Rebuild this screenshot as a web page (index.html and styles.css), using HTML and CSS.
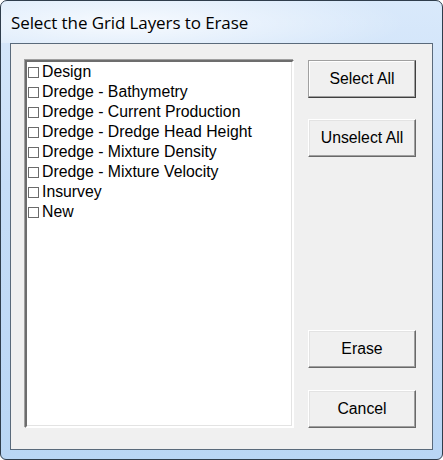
FILE: index.html
```html
<!DOCTYPE html>
<html>
<head>
<meta charset="utf-8">
<link rel="stylesheet" href="styles.css">
</head>
<body>
<div class="window">
  <div class="titlebar"><span class="title">Select the Grid Layers to Erase</span></div>
  <div class="client">
    <div class="listbox">
      <div class="item"><span class="cb"></span>Design</div>
      <div class="item"><span class="cb"></span>Dredge - Bathymetry</div>
      <div class="item"><span class="cb"></span>Dredge - Current Production</div>
      <div class="item"><span class="cb"></span>Dredge - Dredge Head Height</div>
      <div class="item"><span class="cb"></span>Dredge - Mixture Density</div>
      <div class="item"><span class="cb"></span>Dredge - Mixture Velocity</div>
      <div class="item"><span class="cb"></span>Insurvey</div>
      <div class="item"><span class="cb"></span>New</div>
    </div>
    <div class="buttons">
      <div class="group">
        <button class="btn default">Select All</button>
        <button class="btn">Unselect All</button>
      </div>
      <div class="group low">
        <button class="btn">Erase</button>
        <button class="btn">Cancel</button>
      </div>
    </div>
  </div>
</div>
</body>
</html>
```
FILE: styles.css
```css
html, body {
  margin: 0;
  padding: 0;
  background: #ffffff;
}
.window {
  box-sizing: border-box;
  width: 443px;
  height: 460px;
  border: 1px solid #2f3d4c;
  border-radius: 7px 7px 6px 6px;
  background: linear-gradient(180deg, #d9e9fb 0%, #c6ddf7 40%, #b9d6f5 100%);
  overflow: hidden;
  display: flex;
  flex-direction: column;
  padding: 0 9px 9px 9px;
}
.titlebar {
  height: 42px;
  display: flex;
  align-items: center;
  background: radial-gradient(ellipse 280px 42px at 125px 22px, rgba(255,255,255,0.8), rgba(255,255,255,0) 100%);
  margin: 0 -9px;
  padding-left: 10px;
}
.title {
  font-family: "Open Sans", "Noto Sans", sans-serif;
  font-size: 17px;
  color: #000;
  margin-top: 1px;
  letter-spacing: -0.1px;
}
.client {
  flex: 1;
  border: 1px solid #5a6a7b;
  background: #f0f0f0;
  display: flex;
  padding: 16px 14px 21px 14px;
}
.listbox {
  box-sizing: border-box;
  width: 269px;
  height: 368px;
  background: #fff;
  border-style: solid;
  border-width: 2px;
  border-color: #6d6d6d #ffffff #ffffff #6d6d6d;
  box-shadow: inset -1px -1px 0 #e3e3e3, -1px -1px 0 #a0a0a0;
  padding-left: 1px;
}
.item {
  height: 20px;
  display: flex;
  align-items: center;
  font-family: "Liberation Sans", Arial, sans-serif;
  font-size: 15.8px;
  color: #000;
}
.cb {
  box-sizing: border-box;
  width: 11px;
  height: 11px;
  border: 1px solid #6a6a6a;
  background: #fff;
  margin-right: 3px;
  margin-top: 1px;
}
.buttons {
  margin-left: 14px;
  display: flex;
  flex-direction: column;
  justify-content: space-between;
  height: 368px;
}
.group {
  display: flex;
  flex-direction: column;
  gap: 21px;
}
.group.low {
  gap: 22px;
}
.btn {
  box-sizing: border-box;
  width: 108px;
  height: 38px;
  background: #f0f0f0;
  font-family: "Liberation Sans", Arial, sans-serif;
  font-size: 15.8px;
  color: #000;
  border-style: solid;
  border-width: 1px;
  border-color: #ffffff #696969 #696969 #ffffff;
  box-shadow: inset -1px -1px 0 #a0a0a0, inset 1px 1px 0 #e3e3e3;
  padding: 0;
  margin: 0;
}
.btn.default {
  border-color: #a0a0a0 #404040 #404040 #a0a0a0;
  box-shadow: inset -1px -1px 0 #a0a0a0, inset 1px 1px 0 #ffffff;
}
```
